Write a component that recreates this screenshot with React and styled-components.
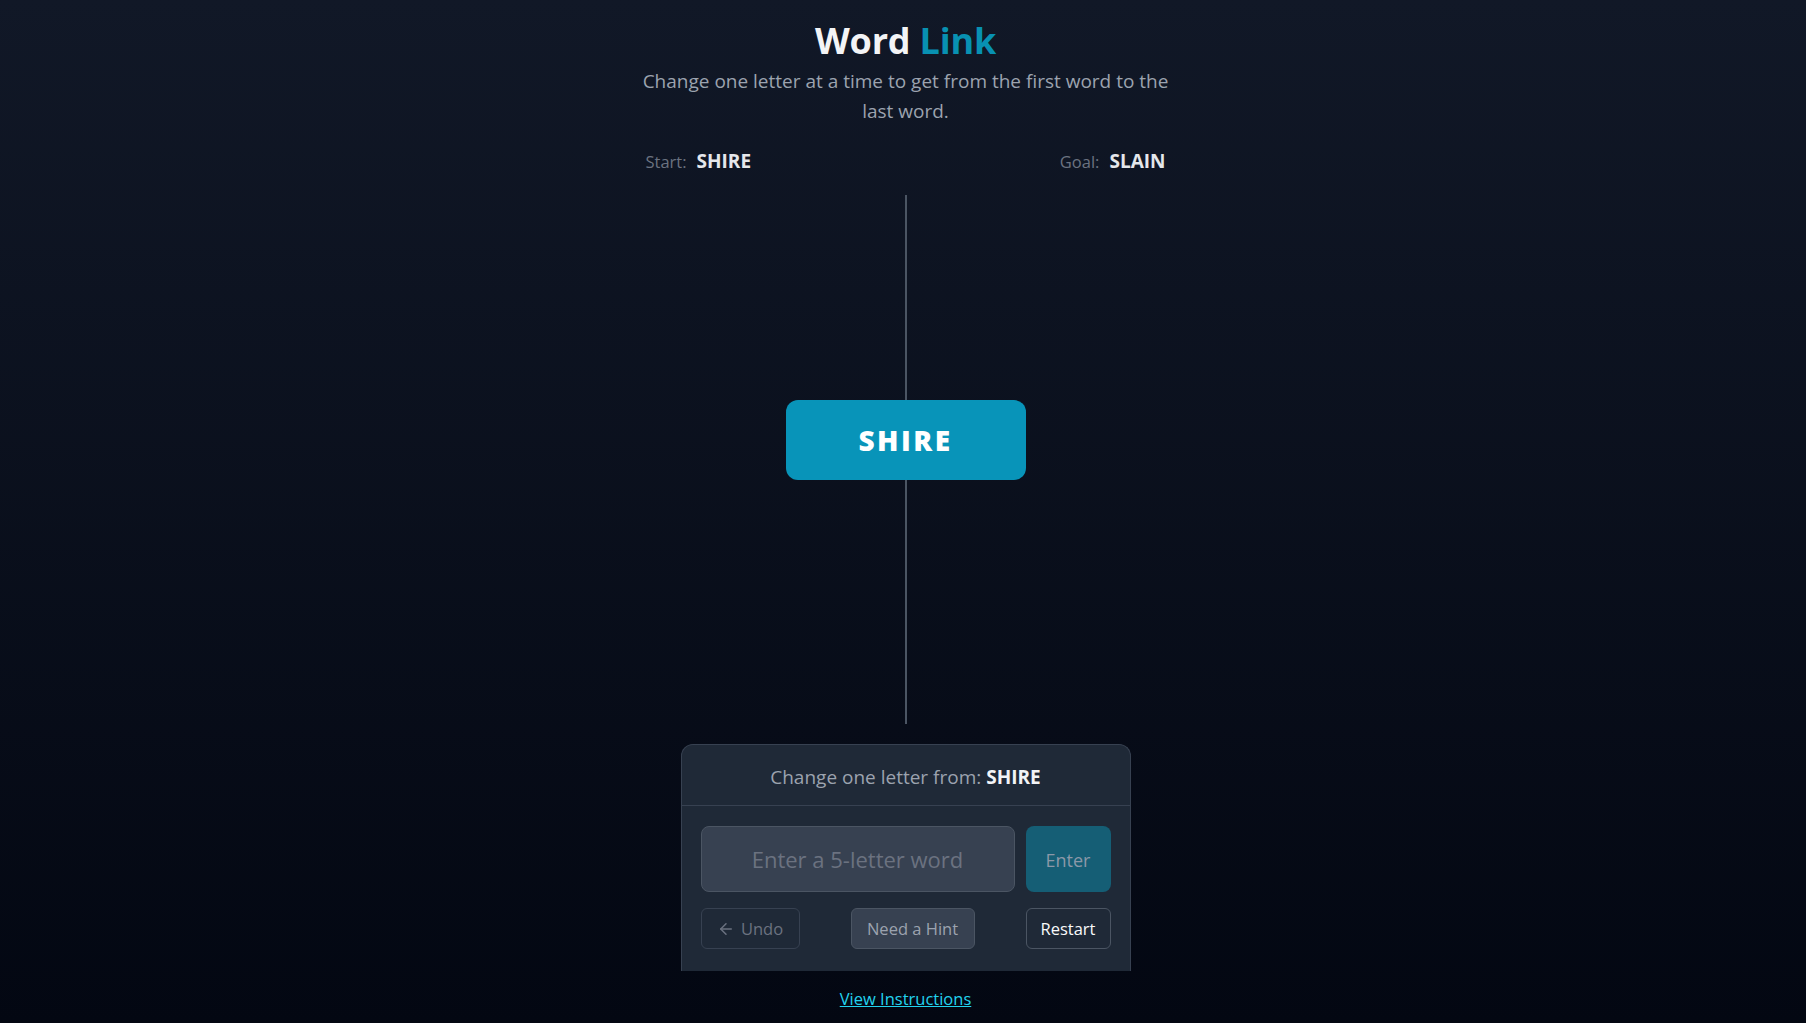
import React from "react";
import styled, { createGlobalStyle } from "styled-components";

const Global = createGlobalStyle`
  html, body { margin: 0; padding: 0; height: 100%; }
  body {
    font-family: "Open Sans", "Noto Sans", sans-serif;
    background: linear-gradient(to bottom, #111827, #030712);
    min-height: 1023px;
  }
  #root { min-height: 1023px; }
`;

const Page = styled.div`
  min-height: 1023px;
  display: flex;
  flex-direction: column;
  align-items: center;
  padding-top: 20px;
  padding-left: 5px;
  box-sizing: border-box;
`;

const Title = styled.h1`
  margin: 0;
  font-size: 36px;
  line-height: 42px;
  font-weight: 700;
  color: #f3f4f6;
  letter-spacing: -0.2px;
`;

const Accent = styled.span`
  color: #0891b2;
`;

const Subtitle = styled.p`
  margin: 4px 0 0;
  width: 545px;
  text-align: center;
  font-size: 19px;
  line-height: 30px;
  color: #9ca3af;
`;

const WordsRow = styled.div`
  width: 520px;
  margin-top: 23px;
  display: flex;
  justify-content: space-between;
  align-items: baseline;
  line-height: 24px;
`;

const Label = styled.span`
  color: #6b7280;
  font-size: 16.5px;
  margin-right: 10px;
`;

const WordValue = styled.span`
  color: #e5e7eb;
  font-weight: 700;
  font-size: 19px;
`;

const Chain = styled.div`
  margin-top: 21px;
  height: 529px;
  display: flex;
  flex-direction: column;
  align-items: center;
`;

const Connector = styled.div`
  width: 2px;
  background: #4b5563;
  height: ${(p) => (p.$h ? `${p.$h}px` : "auto")};
  flex: ${(p) => (p.$h ? "none" : "1")};
`;

const Tile = styled.div`
  width: 240px;
  height: 80px;
  border-radius: 12px;
  background: #0894b9;
  color: #ffffff;
  display: flex;
  align-items: center;
  justify-content: center;
  font-size: 28px;
  font-weight: 800;
  letter-spacing: 2.5px;
`;

const Panel = styled.div`
  margin-top: 20px;
  width: 450px;
  background: #1f2937;
  border: 1px solid #374151;
  border-bottom: none;
  border-radius: 12px 12px 0 0;
  box-sizing: border-box;
`;

const PanelHeader = styled.div`
  height: 61px;
  display: flex;
  align-items: center;
  justify-content: center;
  border-bottom: 1px solid #374151;
  box-sizing: border-box;
  font-size: 19px;
  color: #9ca3af;
  padding-top: 4px;
`;

const Strong = styled.strong`
  color: #f3f4f6;
  font-weight: 700;
  margin-left: 5px;
`;

const PanelBody = styled.div`
  padding: 20px 19px 22px;
  display: flex;
  flex-direction: column;
  gap: 16px;
`;

const InputRow = styled.div`
  display: flex;
  gap: 11px;
`;

const WordInput = styled.input`
  flex: 1;
  height: 66px;
  box-sizing: border-box;
  background: #374151;
  border: 1px solid #4b5563;
  border-radius: 8px;
  text-align: center;
  font-family: inherit;
  font-size: 22px;
  color: #f3f4f6;
  outline: none;
  &::placeholder { color: #6b7280; }
`;

const EnterButton = styled.button`
  width: 85px;
  height: 66px;
  border: none;
  border-radius: 8px;
  background: #155e75;
  color: #8b98a8;
  font-family: inherit;
  font-size: 18px;
  font-weight: 500;
  padding-top: 2px;
`;

const ActionRow = styled.div`
  display: flex;
  justify-content: space-between;
`;

const ActionButton = styled.button`
  height: 41px;
  box-sizing: border-box;
  width: ${(p) => p.$w}px;
  border-radius: 6px;
  font-family: inherit;
  font-size: 16.5px;
  display: flex;
  align-items: center;
  justify-content: center;
  gap: 6px;
  padding: 0;
  background: ${(p) =>
    p.$variant === "hint" ? "#374151" : "transparent"};
  border: 1px solid
    ${(p) =>
      p.$variant === "hint" ? "#4b5563" : p.$variant === "restart" ? "#4b5563" : "#374151"};
  color: ${(p) =>
    p.$variant === "restart" ? "#f9fafb" : p.$variant === "hint" ? "#9ca3af" : "#6b7280"};
`;

const InstructionsLink = styled.a`
  margin-top: 16px;
  color: #22d3ee;
  font-size: 16.5px;
  text-decoration: underline;
  cursor: pointer;
`;

function ArrowLeft() {
  return (
    <svg width="18" height="18" viewBox="0 0 24 24" fill="none" stroke="currentColor" strokeWidth="2" strokeLinecap="round" strokeLinejoin="round">
      <path d="M19 12H5" />
      <path d="M12 19l-7-7 7-7" />
    </svg>
  );
}

export default function App() {
  return (
    <>
      <Global />
      <Page>
        <Title>
          Word <Accent>Link</Accent>
        </Title>
        <Subtitle>
          Change one letter at a time to get from the first word to the last word.
        </Subtitle>
        <WordsRow>
          <span>
            <Label>Start:</Label>
            <WordValue>SHIRE</WordValue>
          </span>
          <span>
            <Label>Goal:</Label>
            <WordValue>SLAIN</WordValue>
          </span>
        </WordsRow>
        <Chain>
          <Connector $h={205} />
          <Tile>SHIRE</Tile>
          <Connector />
        </Chain>
        <Panel>
          <PanelHeader>
            Change one letter from:<Strong>SHIRE</Strong>
          </PanelHeader>
          <PanelBody>
            <InputRow>
              <WordInput placeholder="Enter a 5-letter word" />
              <EnterButton>Enter</EnterButton>
            </InputRow>
            <ActionRow>
              <ActionButton $w={99} $variant="undo">
                <ArrowLeft /> Undo
              </ActionButton>
              <ActionButton $w={124} $variant="hint">Need a Hint</ActionButton>
              <ActionButton $w={85} $variant="restart">Restart</ActionButton>
            </ActionRow>
          </PanelBody>
        </Panel>
        <InstructionsLink>View Instructions</InstructionsLink>
      </Page>
    </>
  );
}
